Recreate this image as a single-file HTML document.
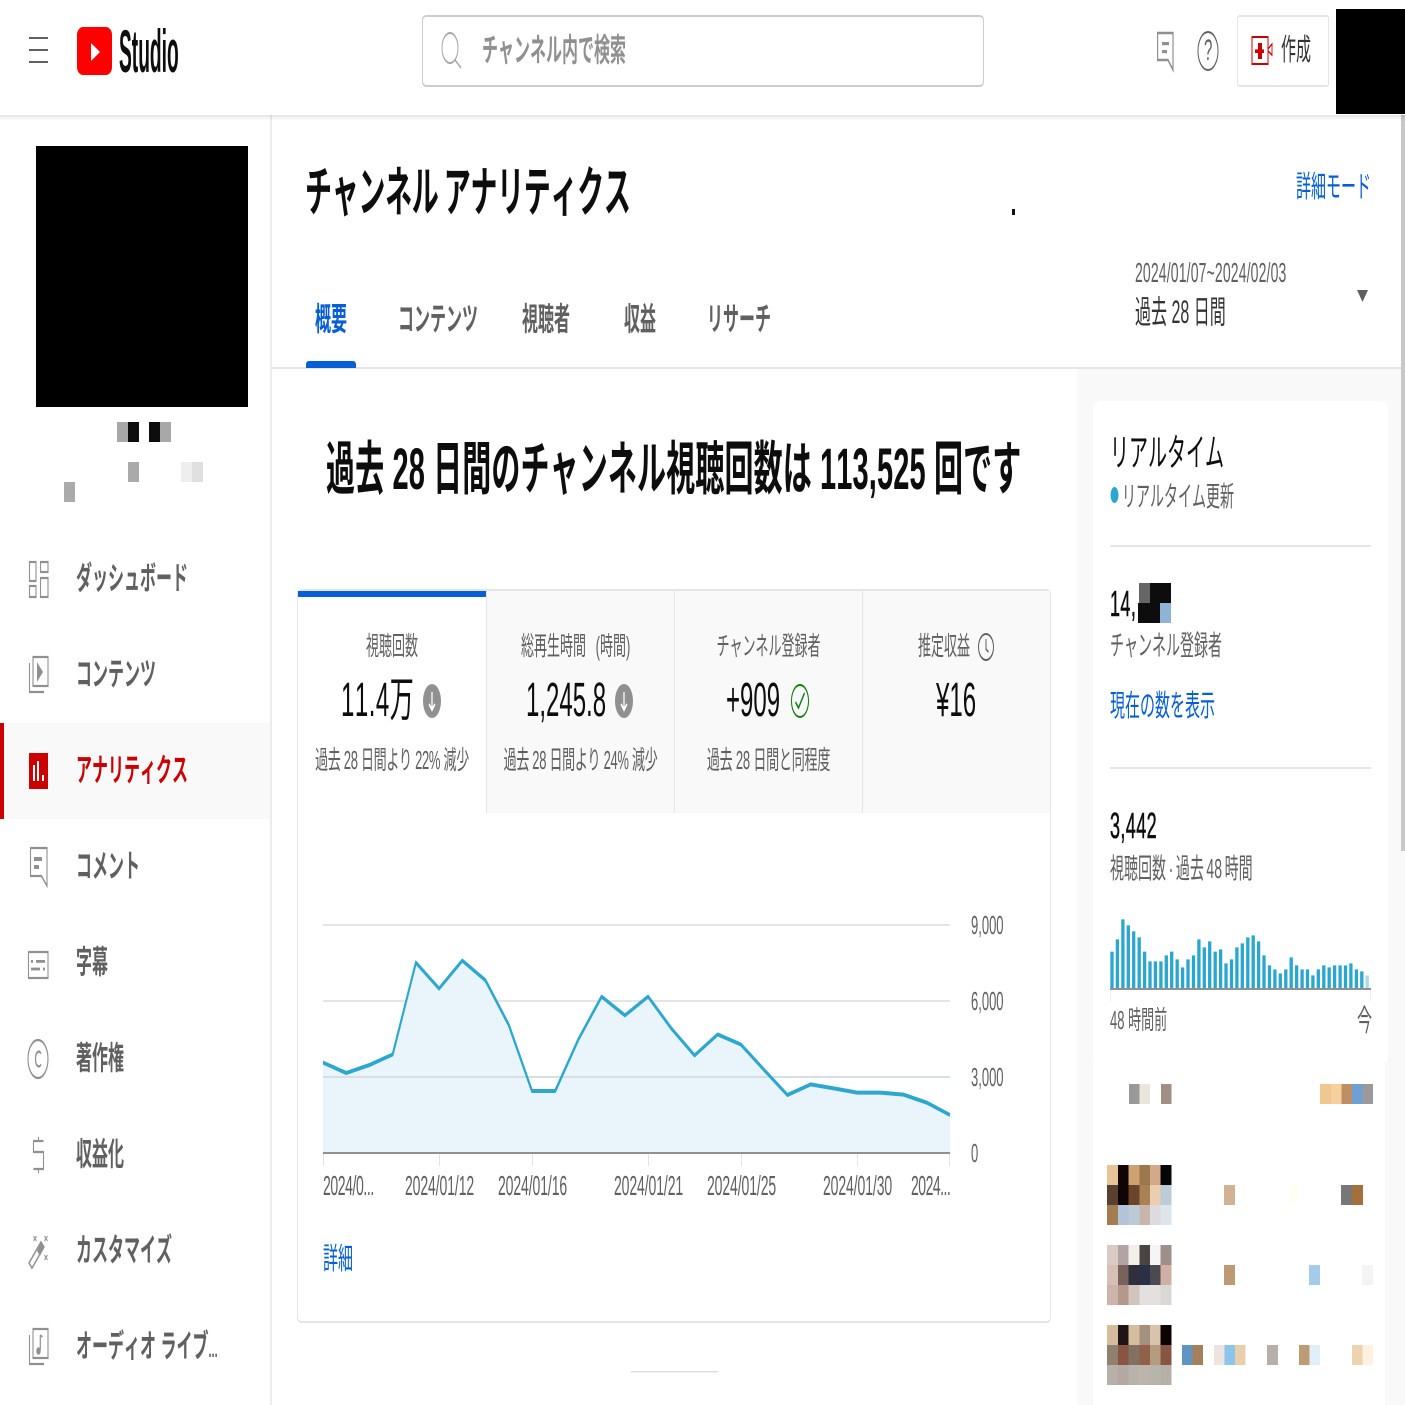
<!DOCTYPE html>
<html lang="ja"><head><meta charset="utf-8"><title>Channel Analytics</title>
<style>
html,body{margin:0;padding:0;width:1405px;height:1405px;overflow:hidden;background:#fff}
#p{position:absolute;left:0;top:0;width:1405px;height:702.5px;transform:scale(1,2);transform-origin:0 0;background:#fff;font-family:"Liberation Sans","Noto Sans CJK JP",sans-serif;overflow:hidden;font-kerning:none}
.t{position:absolute;white-space:nowrap;line-height:20px;height:20px;color:#606060}
.h{transform:translateY(.5px)}
.c{text-align:center}
.n{left:76px;font-size:16px;font-weight:700;color:#606060;transform:translateY(.5px)}
.tab{top:151px;font-size:16px;font-weight:700;color:#606060}
.bl{color:#065fd4}
.k{color:#0d0d0d}
svg{position:absolute;left:0;top:0}
</style></head><body><div id="p">

<svg width="1405" height="702.5" viewBox="0 0 1405 702.5">
<rect x="1077" y="184.5" width="328" height="518" fill="#f9f9f9"/>
<rect x="1093" y="200.5" width="295" height="332" rx="8" ry="4" fill="#fff"/>
<rect x="1093" y="530.5" width="292" height="172" fill="#fff"/>
<rect x="1401" y="57.5" width="4" height="368" fill="#c8c8c8"/>
<rect x="272" y="183.5" width="1129" height="1" fill="#e5e5e5"/>
<rect x="270" y="57" width="2" height="646" fill="#ececec"/>
<rect x="0" y="361.5" width="270" height="48" fill="#f9f9f9"/>
<rect x="0" y="361.5" width="4" height="48" fill="#cc0000"/>
<rect x="0" y="57.5" width="1405" height="1" fill="#000" fill-opacity=".09"/>
<rect x="0" y="58.5" width="1405" height="1" fill="#000" fill-opacity=".04"/>
<rect x="0" y="59.5" width="1405" height=".7" fill="#000" fill-opacity=".015"/>
<rect x="0" y="0" width="1405" height="57.5" fill="#fff"/>
<rect x="1336" y="4.5" width="69" height="52.5" fill="#000"/>
<rect x="36" y="73" width="212" height="130.5" fill="#000"/>
<rect x="422.5" y="8" width="561" height="35" rx="4" ry="2" fill="#fff" stroke="#ccc" stroke-width="1"/>
<rect x="1237.5" y="8" width="91" height="35" rx="2" ry="1" fill="#fff" stroke="#e5e5e5" stroke-width="1"/>
<rect x="297.5" y="295" width="753" height="366" rx="4" ry="2" fill="#fff" stroke="#e5e5e5" stroke-width="1"/>
<rect x="487" y="295.5" width="563" height="111" fill="#f9f9f9"/>
<rect x="486" y="295.5" width="1" height="111" fill="#e5e5e5"/>
<rect x="674" y="295.5" width="1" height="111" fill="#e5e5e5"/>
<rect x="862" y="295.5" width="1" height="111" fill="#e5e5e5"/>
<rect x="298" y="295.5" width="188" height="3" fill="#065fd4"/>
<path d="M306 184V182.5Q306 180.5 309 180.5H353Q356 180.5 356 182.5V184Z" fill="#065fd4"/>
<rect x="1110" y="272.5" width="261" height="1" fill="#e5e5e5"/>
<rect x="1110" y="383.5" width="261" height="1" fill="#e5e5e5"/>
<rect x="631" y="685.5" width="87" height=".7" fill="#ddd"/>
<rect x="1012" y="104.5" width="3" height="3" fill="#111"/>

<g fill="#606060"><rect x="29" y="18.5" width="19" height="1"/><rect x="29" y="24.5" width="19" height="1"/><rect x="29" y="30.5" width="19" height="1"/></g>
<rect x="77" y="13.5" width="35" height="24" rx="6" ry="4" fill="#f00"/><path d="M91 21.5L100 26L91 30.5Z" fill="#fff"/>
<g fill="none" stroke="#a8a8a8" stroke-width="1"><ellipse cx="450" cy="24" rx="8" ry="7.5"/><path d="M455 30L461 34"/></g>
<g fill="none" stroke="#909090" stroke-width="1.2"><path d="M1157.6 16.5H1173V35L1168 30H1157.6Z"/></g>
<rect x="1162" y="21" width="7" height="1.6" fill="#909090"/><rect x="1162" y="25" width="5" height="1.6" fill="#909090"/>
<ellipse cx="1208" cy="25.5" rx="10" ry="9.5" fill="none" stroke="#606060" stroke-width="1"/>
<rect x="1252" y="18.5" width="16" height="13.5" fill="none" stroke="#cc0000" stroke-width="1"/><rect x="1258" y="21.5" width="4" height="8" fill="#cc0000"/><rect x="1255" y="24.7" width="9" height="1.8" fill="#cc0000"/>
<path d="M1268 23.5L1272 21V26.5L1268 24.5" transform="translate(0,1)" fill="none" stroke="#cc0000" stroke-width=".9"/>

<g fill="none" stroke="#909090" stroke-width="1.1">
<rect x="29.5" y="281" width="6.5" height="9.5"/><rect x="40.5" y="281" width="7.5" height="5"/><rect x="29.5" y="293" width="6.5" height="5.5"/><rect x="40.5" y="289" width="7.5" height="9.5"/>
<rect x="33" y="328.5" width="15" height="14.5"/><path d="M29.5 331.5V346H44"/>
<path d="M30.5 424H47V443L41.5 438H30.5Z"/>
<rect x="28.5" y="476" width="19.5" height="13"/>
<ellipse cx="38" cy="529.5" rx="10" ry="9.5"/><path d="M41 526.8C39.5 525 35.5 525.5 35.5 529.5C35.5 533.5 39.5 534 41 532.2" stroke-width="1.2"/>
<path d="M43.5 570.5H33.5V576H43.5V584.5H33.5M38.5 568.5V570.5M38.5 584.5V586.5"/>
<path d="M29 631.5L32 634L44 623.5L41 621Z"/>
<path d="M33.5 618L36.5 620.5M36.5 618L33.5 620.5M44.5 618L47.5 620.5M47.5 618L44.5 620.5M44.5 627.5L47.5 630M47.5 627.5L44.5 630" stroke-width=".8"/>
<rect x="33" y="664.5" width="15" height="14.5"/><path d="M29.5 667.5V682H44"/>
</g>
<path d="M37 334L43 339L37 344Z" transform="translate(0,-3)" fill="#909090"/>
<rect x="34" y="428.5" width="8" height="2" fill="#909090"/><rect x="34" y="432.5" width="5" height="2" fill="#909090"/>
<g fill="#909090"><rect x="31" y="480" width="2" height="1.4"/><rect x="36" y="480" width="9" height="1.4"/><rect x="31" y="483.8" width="9" height="1.4"/><rect x="43" y="483.8" width="2" height="1.4"/></g>
<path d="M37 625.5L41 621L44 623.5L40 628Z" fill="#909090"/>
<path d="M40.3 667.5V675" stroke="#909090" stroke-width="1.2" fill="none"/><ellipse cx="38.5" cy="675.5" rx="2.2" ry="1.9" fill="#909090"/><path d="M40.3 667.5L42.5 668.5" stroke="#909090" fill="none"/>
<rect x="29" y="376.5" width="19" height="18" fill="#cc0000"/>
<g fill="#fff"><rect x="33" y="382.5" width="2" height="8"/><rect x="37" y="380.5" width="2" height="10"/><rect x="42" y="387.5" width="2" height="3"/></g>

<ellipse cx="986" cy="323.5" rx="7.5" ry="6.5" fill="none" stroke="#606060" stroke-width="1"/><path d="M986 319.5V324.5L988.5 326" fill="none" stroke="#606060"/>
<ellipse cx="432" cy="350.5" rx="9" ry="8.5" fill="#909090"/><path d="M432 346V355M429 352L432 355L435 352" fill="none" stroke="#fff" stroke-width="1.3"/>
<ellipse cx="624" cy="350.5" rx="9" ry="8.5" fill="#909090"/><path d="M624 346V355M621 352L624 355L627 352" fill="none" stroke="#fff" stroke-width="1.3"/>
<ellipse cx="800" cy="350.5" rx="8.5" ry="8" fill="none" stroke="#0a7d0a" stroke-width="1"/><path d="M795.5 351L798.5 354L804.5 346.5" fill="none" stroke="#0a7d0a" stroke-width="1.2"/>
<path d="M1357 145L1368 145L1362.5 151Z" fill="#606060"/>

<g fill="#e5e5e5"><rect x="323" y="462" width="627" height="1"/><rect x="323" y="500" width="627" height="1"/></g>
<path d="M323 531.3L346.2 536.5L369.4 532.5L392.7 527.2L415.9 481.3L439.1 494.3L462.3 480.3L485.5 490.2L508.8 512.5L532 545.5L555.2 545.5L578.4 519.7L601.6 498.3L624.9 507.7L648.1 498.3L671.3 514.2L694.5 527.7L717.7 517.2L741 522.3L764.2 535L787.4 547.5L810.6 542.2L833.8 544.2L857.1 546.3L880.3 546.3L903.5 547.3L926.7 551.3L950 557.5V576H323Z" fill="#e9f5fb"/>
<rect x="323" y="538" width="627" height="1" fill="#d8dfe2"/>
<path d="M323 531.3L346.2 536.5L369.4 532.5L392.7 527.2L415.9 481.3L439.1 494.3L462.3 480.3L485.5 490.2L508.8 512.5L532 545.5L555.2 545.5L578.4 519.7L601.6 498.3L624.9 507.7L648.1 498.3L671.3 514.2L694.5 527.7L717.7 517.2L741 522.3L764.2 535L787.4 547.5L810.6 542.2L833.8 544.2L857.1 546.3L880.3 546.3L903.5 547.3L926.7 551.3L950 557.5" fill="none" stroke="#2ea7cf" stroke-width="2" stroke-linejoin="round"/>
<rect x="323" y="576" width="627" height="1" fill="#909090"/>
<path d="M323.5 577V583M439.5 577V583M532.5 577V583M648.5 577V583M741.5 577V583M857.5 577V583M949.5 577V583" stroke="#e5e5e5" fill="none"/>

<path d="M1112 494.5V475.8M1117.4 494.5V469.7M1122.9 494.5V459.7M1128.3 494.5V462.7M1133.7 494.5V465.7M1139.2 494.5V468.7M1144.6 494.5V475.8M1150 494.5V480.7M1155.4 494.5V480.7M1160.9 494.5V480.7M1166.3 494.5V477.7M1171.7 494.5V475.8M1177.2 494.5V479.7M1182.6 494.5V483.7M1188 494.5V479.7M1193.5 494.5V477.7M1198.9 494.5V469.7M1204.3 494.5V473.7M1209.7 494.5V470.7M1215.2 494.5V475.8M1220.6 494.5V474.7M1226 494.5V481.7M1231.5 494.5V479.7M1236.9 494.5V473.7M1242.3 494.5V471.7M1247.8 494.5V468.7M1253.2 494.5V467.7M1258.6 494.5V470.7M1264 494.5V477.7M1269.5 494.5V482.7M1274.9 494.5V484.7M1280.3 494.5V486.7M1285.8 494.5V484.7M1291.2 494.5V478.7M1296.6 494.5V482.7M1302.1 494.5V484.7M1307.5 494.5V484.7M1312.9 494.5V487.7M1318.3 494.5V484.7M1323.8 494.5V482.7M1329.2 494.5V483.7M1334.6 494.5V482.7M1340.1 494.5V482.7M1345.5 494.5V482.7M1350.9 494.5V481.7M1356.4 494.5V484.7M1361.8 494.5V485.7" stroke="#2ba6cf" stroke-width="3.3" fill="none"/>
<path d="M1367.2 494.5V487.7" stroke="#a9d8ea" stroke-width="3.3" fill="none"/>
<rect x="1110" y="494" width="261" height="1" fill="#909090"/>
<path d="M1110.5 495V500.5M1370.5 495V500.5" stroke="#eee" fill="none"/>
<ellipse cx="1114.5" cy="247.5" rx="4" ry="4" fill="#2ba6cf"/>

<g shape-rendering="crispEdges">
<rect x="117" y="211" width="11" height="10" fill="#a8a8a8"/><rect x="128" y="211" width="11" height="10" fill="#0d0d0d"/><rect x="149" y="211" width="11" height="10" fill="#0d0d0d"/><rect x="160" y="211" width="11" height="10" fill="#a8a8a8"/>
<rect x="128" y="231" width="11" height="10" fill="#aaa"/><rect x="181" y="231" width="11" height="10" fill="#eee"/><rect x="192" y="231" width="11" height="10" fill="#e0e0e0"/><rect x="64" y="241" width="11" height="10" fill="#aaa"/>
<rect x="1139" y="291.5" width="11" height="10" fill="#666"/><rect x="1150" y="291.5" width="21" height="10" fill="#0d0d0d"/><rect x="1138" y="301.5" width="22" height="10" fill="#0d0d0d"/><rect x="1160" y="301.5" width="11" height="10" fill="#8fb3d6"/>

<rect x="1129" y="542" width="10.5" height="10" fill="#999"/><rect x="1139.5" y="542" width="10.5" height="10" fill="#ece5dc"/><rect x="1161" y="542" width="10.5" height="10" fill="#a08f82"/>
<rect x="1320" y="542" width="11" height="10" fill="#eec88f"/><rect x="1331" y="542" width="10.5" height="10" fill="#f7d0a0"/><rect x="1341.5" y="542" width="10.5" height="10" fill="#be8f63"/><rect x="1352" y="542" width="10.5" height="10" fill="#6fa0d5"/><rect x="1362.5" y="542" width="10.5" height="10" fill="#9a9a9a"/>

<g><rect x="1107" y="582.5" width="11" height="10" fill="#e6c497"/><rect x="1118" y="582.5" width="10.7" height="10" fill="#0f0505"/><rect x="1128.7" y="582.5" width="10.7" height="10" fill="#cda26f"/><rect x="1139.4" y="582.5" width="10.7" height="10" fill="#9c774e"/><rect x="1150" y="582.5" width="10.7" height="10" fill="#d4a988"/><rect x="1160.7" y="582.5" width="10.7" height="10" fill="#060606"/>
<rect x="1107" y="592.5" width="11" height="10" fill="#5a4030"/><rect x="1118" y="592.5" width="10.7" height="10" fill="#0f0505"/><rect x="1128.7" y="592.5" width="10.7" height="10" fill="#6a452c"/><rect x="1139.4" y="592.5" width="10.7" height="10" fill="#a98156"/><rect x="1150" y="592.5" width="10.7" height="10" fill="#ebceb0"/><rect x="1160.7" y="592.5" width="10.7" height="10" fill="#bccbd8"/>
<rect x="1107" y="602.5" width="11" height="10" fill="#a37d52"/><rect x="1118" y="602.5" width="10.7" height="10" fill="#b4c4d8"/><rect x="1128.7" y="602.5" width="10.7" height="10" fill="#bccad4"/><rect x="1139.4" y="602.5" width="10.7" height="10" fill="#c8b6ac"/><rect x="1150" y="602.5" width="10.7" height="10" fill="#dddbe0"/><rect x="1160.7" y="602.5" width="10.7" height="10" fill="#dde6ea"/></g>
<rect x="1224" y="592.5" width="11" height="10" fill="#d1b394"/><rect x="1290" y="592.5" width="9" height="10" fill="#fffff5"/><rect x="1341" y="592.5" width="11" height="10" fill="#777"/><rect x="1352" y="592.5" width="11" height="10" fill="#a56f3c"/>

<g><rect x="1107" y="622.5" width="11" height="10" fill="#d8cbc5"/><rect x="1118" y="622.5" width="10.7" height="10" fill="#b0a4a4"/><rect x="1128.7" y="622.5" width="10.7" height="10" fill="#f4efe8"/><rect x="1139.4" y="622.5" width="10.7" height="10" fill="#4a4442"/><rect x="1150" y="622.5" width="10.7" height="10" fill="#f5f5f5"/><rect x="1160.7" y="622.5" width="10.7" height="10" fill="#9c9088"/>
<rect x="1107" y="632.5" width="11" height="10" fill="#d4c0b4"/><rect x="1118" y="632.5" width="10.7" height="10" fill="#7a625c"/><rect x="1128.7" y="632.5" width="10.7" height="10" fill="#2e303c"/><rect x="1139.4" y="632.5" width="10.7" height="10" fill="#2a3048"/><rect x="1150" y="632.5" width="10.7" height="10" fill="#4a4a50"/><rect x="1160.7" y="632.5" width="10.7" height="10" fill="#d0b0a4"/>
<rect x="1107" y="642.5" width="11" height="10" fill="#ccb4ac"/><rect x="1118" y="642.5" width="10.7" height="10" fill="#b4988c"/><rect x="1128.7" y="642.5" width="10.7" height="10" fill="#d0c4bc"/><rect x="1139.4" y="642.5" width="10.7" height="10" fill="#e4e0e0"/><rect x="1150" y="642.5" width="10.7" height="10" fill="#e4e0e0"/><rect x="1160.7" y="642.5" width="10.7" height="10" fill="#d8d8d4"/></g>
<rect x="1224" y="632.5" width="11" height="10" fill="#bd9a74"/><rect x="1309" y="632.5" width="11" height="10" fill="#a5cbec"/><rect x="1362" y="632.5" width="11" height="10" fill="#f4f4f4"/>

<g><rect x="1107" y="662.5" width="11" height="10" fill="#d4bc9c"/><rect x="1118" y="662.5" width="10.7" height="10" fill="#201414"/><rect x="1128.7" y="662.5" width="10.7" height="10" fill="#d4bc9c"/><rect x="1139.4" y="662.5" width="10.7" height="10" fill="#a49080"/><rect x="1150" y="662.5" width="10.7" height="10" fill="#d8c4ac"/><rect x="1160.7" y="662.5" width="10.7" height="10" fill="#0c0404"/>
<rect x="1107" y="672.5" width="11" height="10" fill="#908070"/><rect x="1118" y="672.5" width="10.7" height="10" fill="#885444"/><rect x="1128.7" y="672.5" width="10.7" height="10" fill="#847060"/><rect x="1139.4" y="672.5" width="10.7" height="10" fill="#906048"/><rect x="1150" y="672.5" width="10.7" height="10" fill="#b49c80"/><rect x="1160.7" y="672.5" width="10.7" height="10" fill="#885444"/>
<rect x="1107" y="682.5" width="11" height="10" fill="#b8b0a8"/><rect x="1118" y="682.5" width="10.7" height="10" fill="#b4a8a4"/><rect x="1128.7" y="682.5" width="10.7" height="10" fill="#b8b4ac"/><rect x="1139.4" y="682.5" width="10.7" height="10" fill="#bcb4ac"/><rect x="1150" y="682.5" width="10.7" height="10" fill="#b8b4ac"/><rect x="1160.7" y="682.5" width="10.7" height="10" fill="#b4b0a8"/></g>
<rect x="1182" y="672.5" width="10.5" height="10" fill="#5f94c4"/><rect x="1192.5" y="672.5" width="10.5" height="10" fill="#a67f5a"/><rect x="1214" y="672.5" width="10.5" height="10" fill="#ece4e0"/><rect x="1224.5" y="672.5" width="10.5" height="10" fill="#8cc4ec"/><rect x="1235" y="672.5" width="10.5" height="10" fill="#e8d0ac"/><rect x="1267" y="672.5" width="11" height="10" fill="#b8b0a8"/><rect x="1299" y="672.5" width="10.5" height="10" fill="#bc9c74"/><rect x="1309.5" y="672.5" width="10.5" height="10" fill="#e0f0f8"/><rect x="1352" y="672.5" width="10.5" height="10" fill="#ecd4b0"/><rect x="1362.5" y="672.5" width="10.5" height="10" fill="#fff0e0"/>
</g>
</svg>

<div class="t" style="left:118.5px;top:17px;font-size:30px;font-weight:700;color:#0d0d0d;transform:scaleX(.64);transform-origin:0 50%">Studio</div>
<div class="t h" style="left:482px;top:16px;font-size:16px;font-weight:700;color:#909090">チャンネル内で検索</div>
<div class="t" style="left:1204px;top:16px;font-size:15px;color:#606060">?</div>
<div class="t" style="left:1281px;top:16px;font-size:15px;color:#333">作成</div>

<div class="t n" style="top:280px">ダッシュボード</div>
<div class="t n" style="top:328px">コンテンツ</div>
<div class="t n" style="top:376px;color:#cc0000">アナリティクス</div>
<div class="t n" style="top:424px">コメント</div>
<div class="t n" style="top:472px">字幕</div>
<div class="t n" style="top:520px">著作権</div>
<div class="t n" style="top:568px">収益化</div>
<div class="t n" style="top:616px">カスタマイズ</div>
<div class="t n" style="top:664px">オーディオ ライブ<span style="font-size:11px">...</span></div>

<div class="t k h" style="left:305px;top:86px;font-size:27px;font-weight:700;word-spacing:-2px;letter-spacing:-.3px">チャンネル アナリティクス</div>
<div class="t bl h" style="left:1296px;top:84px;font-size:15px">詳細モード</div>
<div class="t" style="left:1135px;top:126px;font-size:14px;letter-spacing:.15px">2024/01/07~2024/02/03</div>
<div class="t h" style="left:1135px;top:147px;font-size:16px;color:#333">過去 28 日間</div>
<div class="t tab bl" style="left:315px;color:#065fd4">概要</div>
<div class="t tab" style="left:398px">コンテンツ</div>
<div class="t tab" style="left:522px">視聴者</div>
<div class="t tab" style="left:624px">収益</div>
<div class="t tab" style="left:707px">リサーチ</div>
<div class="t k h" style="left:326px;top:225px;font-size:29px;font-weight:700;letter-spacing:.13px">過去 28 日間のチャンネル視聴回数は 113,525 回です</div>

<div class="t c h" style="left:298px;width:188px;top:313px;font-size:13px">視聴回数</div>
<div class="t h" style="left:521px;top:313px;font-size:13px;word-spacing:6px">総再生時間 (時間)</div>
<div class="t c h" style="left:675px;width:187px;top:313px;font-size:13px">チャンネル登録者</div>
<div class="t h" style="left:918px;top:313px;font-size:13px">推定収益</div>
<div class="t k" style="left:341px;top:341px;font-size:24px;letter-spacing:.5px">11.4万</div>
<div class="t k" style="left:526px;top:341px;font-size:24px">1,245.8</div>
<div class="t k" style="left:726px;top:341px;font-size:24px">+909</div>
<div class="t k" style="left:936px;top:341px;font-size:24px">¥16</div>
<div class="t c h" style="left:298px;width:188px;top:370px;font-size:13px;letter-spacing:-.3px">過去 28 日間より 22% 減少</div>
<div class="t c h" style="left:487px;width:187px;top:370px;font-size:13px;letter-spacing:-.3px">過去 28 日間より 24% 減少</div>
<div class="t c h" style="left:675px;width:187px;top:370px;font-size:13px;letter-spacing:-.2px">過去 28 日間と同程度</div>

<div class="t h" style="left:323px;top:582px;font-size:14px;letter-spacing:-.4px">2024/0...</div>
<div class="t h" style="left:405px;top:582px;font-size:14px;letter-spacing:-.1px">2024/01/12</div>
<div class="t h" style="left:498px;top:582px;font-size:14px;letter-spacing:-.1px">2024/01/16</div>
<div class="t h" style="left:614px;top:582px;font-size:14px;letter-spacing:-.1px">2024/01/21</div>
<div class="t h" style="left:707px;top:582px;font-size:14px;letter-spacing:-.1px">2024/01/25</div>
<div class="t h" style="left:823px;top:582px;font-size:14px;letter-spacing:-.1px">2024/01/30</div>
<div class="t h" style="left:911px;top:582px;font-size:14px;letter-spacing:-.5px">2024...</div>
<div class="t" style="left:971px;top:453px;font-size:13px">9,000</div>
<div class="t" style="left:971px;top:491px;font-size:13px">6,000</div>
<div class="t" style="left:971px;top:529px;font-size:13px">3,000</div>
<div class="t" style="left:971px;top:567px;font-size:13px">0</div>
<div class="t bl h" style="left:323px;top:620px;font-size:15px">詳細</div>

<div class="t k" style="left:1110px;top:218px;font-size:19px">リアルタイム</div>
<div class="t" style="left:1122px;top:238px;font-size:14px">リアルタイム更新</div>
<div class="t k" style="left:1110px;top:292px;font-size:18px;letter-spacing:.4px;-webkit-text-stroke:.3px #0d0d0d">14,</div>
<div class="t h" style="left:1110px;top:312px;font-size:14px">チャンネル登録者</div>
<div class="t bl" style="left:1110px;top:344px;font-size:15px">現在の数を表示</div>
<div class="t k" style="left:1110px;top:403px;font-size:18px;letter-spacing:.4px;-webkit-text-stroke:.3px #0d0d0d">3,442</div>
<div class="t" style="left:1110px;top:424px;font-size:14px;word-spacing:-1.3px">視聴回数 · 過去 48 時間</div>
<div class="t h" style="left:1110px;top:500px;font-size:13px">48 時間前</div>
<div class="t h" style="left:1357px;top:501px;font-size:15px">今</div>
</div></body></html>
